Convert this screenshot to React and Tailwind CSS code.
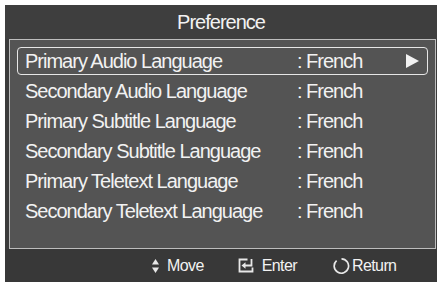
import React from "react";

const rows = [
  "Primary Audio Language",
  "Secondary Audio Language",
  "Primary Subtitle Language",
  "Secondary Subtitle Language",
  "Primary Teletext Language",
  "Secondary Teletext Language",
];

export default function App() {
  return (
    <div className="w-[437px] h-[282px] bg-white pl-[5px] pt-[5px] overflow-hidden" style={{ fontFamily: '"Liberation Sans", Arial, sans-serif' }}>
      <div className="w-[432px] h-[277px] bg-[#3b3b3b] flex flex-col text-[#f2f2f2]">
        <div className="h-[34px] flex items-center justify-center text-[20px] tracking-[-1px] bg-[#3e3e3e]">Preference</div>
        <div className="ml-[4px] mr-[1px] h-[210px] border border-[#bdbdbd] bg-[#545454] pt-[7px] px-[7px] flex flex-col gap-[2px]">
          {rows.map((r, i) => (
            <div
              key={r}
              className={
                "h-[28px] shrink-0 rounded-[4px] border flex items-center pl-[7px] text-[20px] tracking-[-1px] leading-none " +
                (i === 0 ? "border-[#e6e6e6]" : "border-transparent")
              }
            >
              <span className="w-[272px] whitespace-nowrap">{r}</span>
              <span className="whitespace-nowrap">: French</span>
              {i === 0 && (
                <svg width="13" height="14" viewBox="0 0 13 14" className="ml-[44px]">
                  <path d="M0 0 L13 7 L0 14 Z" fill="#f2f2f2" />
                </svg>
              )}
            </div>
          ))}
        </div>
        <div className="flex-1 flex items-center pl-[147px] text-[16px] tracking-[-0.6px] bg-[#383838]">
          <svg width="7" height="14" viewBox="0 0 7 14">
            <path d="M3.5 0 L7 5.5 L0 5.5 Z" fill="#e8e8e8" />
            <path d="M0 8.5 L7 8.5 L3.5 14 Z" fill="#e8e8e8" />
          </svg>
          <span className="ml-[8px]">Move</span>
          <svg width="16" height="15" viewBox="0 0 16 15" className="ml-[34px]">
            <path d="M9.5 1.5 H1.5 V13.5 H14.5 V9.5" fill="none" stroke="#e8e8e8" strokeWidth="1.8" />
            <path d="M13.5 1 V7.5 H6" fill="none" stroke="#e8e8e8" strokeWidth="1.8" />
            <path d="M3.5 7.5 L7.5 4.2 L7.5 10.8 Z" fill="#e8e8e8" />
          </svg>
          <span className="ml-[8px]">Enter</span>
          <svg width="18" height="18" viewBox="0 0 18 18" className="ml-[35px]">
            <path d="M4.6 3.6 A7.2 7.2 0 1 0 9.5 1.8" fill="none" stroke="#e8e8e8" strokeWidth="1.7" />
          </svg>
          <span className="ml-[2px]">Return</span>
        </div>
      </div>
    </div>
  );
}
